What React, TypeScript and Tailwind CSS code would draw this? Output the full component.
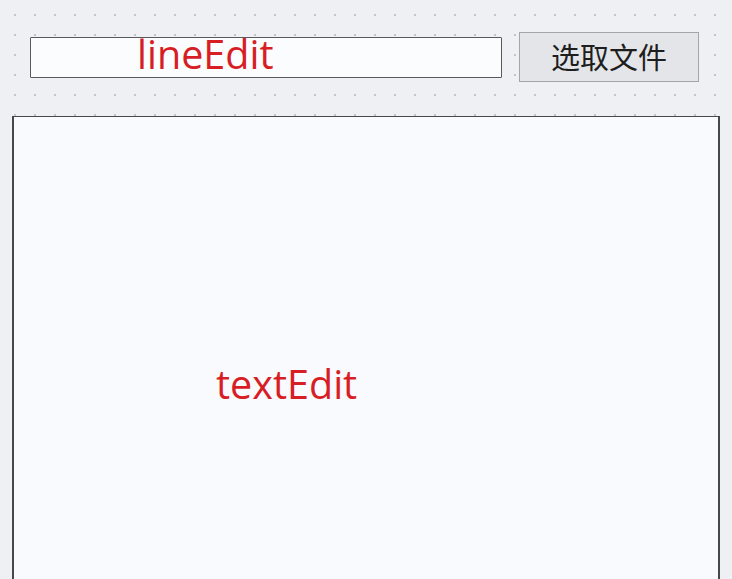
import React from 'react';

const redLabel = 'absolute text-[39.5px] leading-none text-[#d81e25] [font-family:"Open_Sans","Noto_Sans",sans-serif]';

export default function App() {
  return (
    <div className="w-[732px] h-[579px] overflow-hidden bg-[#eef0f3] bg-[radial-gradient(circle,#c2c5cc_0.8px,transparent_1.3px)] bg-[size:20px_20px] bg-[position:5px_5px] flex flex-col">
      {/* top row: line edit + button */}
      <div className="flex items-center gap-[17px] pl-[30px] pt-[32px]">
        <div className="relative w-[472px] h-[41px] bg-[#fbfcfe] border border-[#5a5a5e] rounded-[1px]">
          <span className={`${redLabel} left-[106px] top-[-3px]`}>lineEdit</span>
        </div>
        <button className="w-[180px] h-[50px] bg-[#e4e5e8] border border-[#a3a5aa] flex items-center justify-center text-[29px] text-[#1e1e1e] [font-family:'Noto_Sans_CJK_SC',sans-serif]">
          选取文件
        </button>
      </div>

      {/* text edit */}
      <div className="relative mt-[34px] ml-[12px] w-[708px] h-[500px] shrink-0 bg-[#f8fafd] border border-[#47474d] border-l-2 border-r-2">
        <span className={`${redLabel} left-[202px] top-[248px]`}>textEdit</span>
      </div>
    </div>
  );
}
